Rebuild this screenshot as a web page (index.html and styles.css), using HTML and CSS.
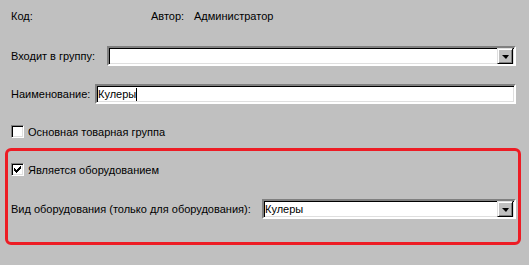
FILE: index.html
```html
<!DOCTYPE html>
<html lang="ru">
<head>
    <meta charset="UTF-8">
    <title>Товарная группа</title>
    <link rel="stylesheet" href="styles.css">
</head>
<body>

<div class="form">
    <div class="row info-row">
        <span class="code-label">Код:</span>
        <span class="author-label">Автор:</span>
        <span>Администратор</span>
    </div>

    <div class="row group-row">
        <label class="label group-label">Входит в группу:</label>
        <div class="combo">
            <div class="combo-text"></div>
            <div class="combo-button"><span class="arrow"></span></div>
        </div>
    </div>

    <div class="row name-row">
        <label class="label name-label">Наименование:</label>
        <div class="edit">Кулеры<span class="caret"></span></div>
    </div>

    <div class="row check-row main-group-row">
        <span class="checkbox"></span>
        <span class="check-label">Основная товарная группа</span>
    </div>

    <div class="highlight">
        <div class="row check-row">
            <span class="checkbox">
                <svg width="7" height="7" viewBox="0 0 7 7" shape-rendering="crispEdges">
                    <path d="M6 0h1v1h-1zM5 1h2v1h-2zM0 2h1v1h-1zM4 2h3v1h-3zM0 3h2v1h-2zM3 3h3v1h-3zM0 4h5v1h-5zM1 5h3v1h-3zM2 6h1v1h-1z" fill="#000"/>
                </svg>
            </span>
            <span class="check-label">Является оборудованием</span>
        </div>

        <div class="row kind-row">
            <label class="label kind-label">Вид оборудования (только для оборудования):</label>
            <div class="combo">
                <div class="combo-text">Кулеры</div>
                <div class="combo-button"><span class="arrow"></span></div>
            </div>
        </div>
    </div>
</div>

</body>
</html>
```

FILE: styles.css
```css
body {
    margin: 0;
    background-color: #c0c0c0;
    font-family: 'Liberation Sans', Arial, sans-serif;
    font-size: 11px;
    line-height: 14px;
    color: #000;
}
.form {
    display: flex;
    flex-direction: column;
    padding: 9px 13px 0 11px;
}
.row {
    display: flex;
    align-items: center;
}
.info-row {
    height: 14px;
}
.code-label {
    width: 140px;
}
.author-label {
    width: 43px;
}
.group-row {
    margin-top: 23px;
}
.group-label {
    width: 96px;
}
.name-row {
    margin-top: 18px;
}
.name-label {
    width: 84px;
}
.kind-label {
    width: 251px;
}

/* sunken 3D fields */
.combo,
.edit {
    flex: 1;
    height: 16px;
    background-color: #fff;
    border: 2px solid;
    border-color: #808080 #fff #fff #808080;
    box-shadow: inset 1px 1px 0 #000, inset -1px -1px 0 #dfdfdf;
    display: flex;
    align-items: center;
}
.edit {
    padding-left: 1px;
}
.caret {
    display: inline-block;
    width: 1px;
    height: 13px;
    background-color: #000;
}
.combo-text {
    flex: 1;
    padding-left: 1px;
}
.combo-button {
    width: 16px;
    height: 16px;
    margin-right: 1px;
    box-sizing: border-box;
    background-color: #c0c0c0;
    border: 1px solid;
    border-color: #dfdfdf #000 #000 #dfdfdf;
    box-shadow: inset 1px 1px 0 #fff, inset -1px -1px 0 #808080;
    display: flex;
    align-items: center;
    justify-content: center;
}
.arrow {
    width: 0;
    height: 0;
    border-left: 4px solid transparent;
    border-right: 3px solid transparent;
    border-top: 4px solid #000;
    margin-top: 1px;
}

/* checkboxes */
.check-row {
    height: 13px;
}
.main-group-row {
    margin-top: 21px;
}
.checkbox {
    width: 13px;
    height: 13px;
    box-sizing: border-box;
    background-color: #fff;
    border: 1px solid;
    border-color: #808080 #fff #fff #808080;
    box-shadow: inset 1px 1px 0 #000, inset -1px -1px 0 #dfdfdf;
    display: flex;
    align-items: center;
    justify-content: center;
}
.check-label {
    margin-left: 4px;
}

/* red frame drawn over the form */
.highlight {
    margin: 10px -5px 0 -6px;
    padding: 12px 2px 23px 3px;
    border: 3px solid #ed1c24;
    border-radius: 6px;
}
.kind-row {
    margin-top: 23px;
}
```
